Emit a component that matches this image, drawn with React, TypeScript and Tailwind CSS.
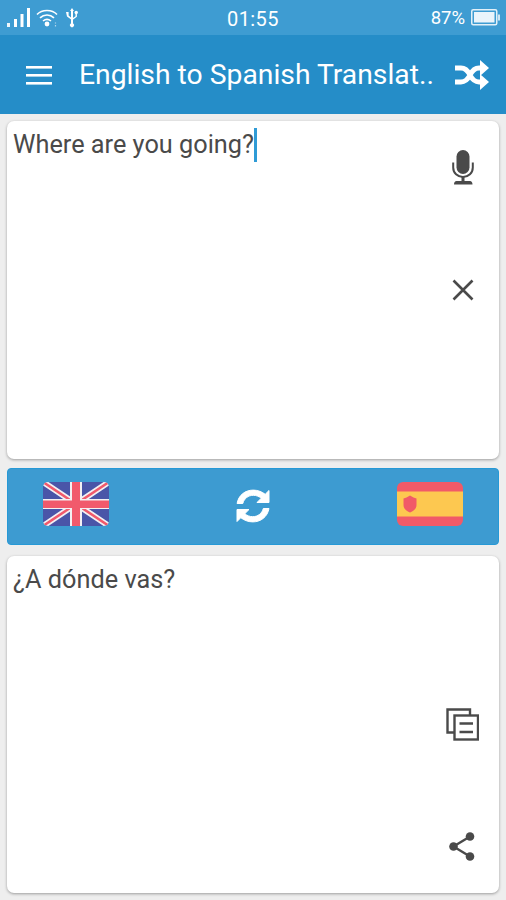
import React from 'react';

const Signal = () => (
  <svg width="23" height="20" viewBox="0 0 23 20" fill="white">
    <rect x="0" y="15" width="3" height="4" opacity="0.9" />
    <rect x="7" y="11" width="3" height="8" />
    <rect x="13.500" y="6" width="3" height="13" />
    <rect x="20" y="0" width="3" height="19" />
  </svg>
);

const Wifi = () => (
  <svg width="23" height="20" viewBox="0 0 23 20" fill="none" stroke="white" strokeWidth="1.600">
    <path d="M1 6.500C6 1.200 16 1.200 21 6.500" />
    <path d="M4 9.800C8 6 14 6 18 9.800" />
    <path d="M7 13C9.500 11 12.500 11 15 13" />
    <circle cx="11" cy="16" r="2.400" fill="white" stroke="none" />
    <path d="M19.500 14.500v1M19.500 17v1.500" strokeWidth="1.200" opacity="0.6" />
  </svg>
);

const Usb = () => (
  <svg width="14" height="20" viewBox="0 0 14 20" fill="white">
    <path d="M7 0l2 3H8v11.200l.1 1.300a2 2 0 1 1-2.200 0l.1-1.300V3H5z" />
    <path d="M1 4h2.600v3.500L6.500 10v1.800L2 8.500z" />
    <circle cx="11.200" cy="4.500" r="1.700" />
    <path d="M10.500 5h1.400v3.800L7.500 12v-1.800l3-2z" />
  </svg>
);

const Battery = () => (
  <svg width="29" height="17" viewBox="0 0 29 17">
    <rect x="0.750" y="0.750" width="25" height="15" rx="1.500" fill="none" stroke="white" strokeWidth="1.500" opacity="0.85" />
    <rect x="3" y="3" width="20.500" height="10.500" fill="#eaf4fb" />
    <rect x="27" y="5.500" width="2" height="6" fill="white" opacity="0.75" />
  </svg>
);

const Menu = () => (
  <svg width="27" height="20" viewBox="0 0 27 20" fill="white">
    <rect x="0" y="1" width="26" height="2.600" />
    <rect x="0" y="9" width="26" height="2.600" />
    <rect x="0" y="17" width="26" height="2.600" />
  </svg>
);

const Shuffle = () => (
  <svg width="35" height="30" viewBox="0 0 35 30">
    <path d="M0 8h6c5 0 7 3 9 7s4 7 9 7h3M0 22h6c5 0 7-3 9-7s4-7 9-7h3" fill="none" stroke="white" strokeWidth="5" />
    <path d="M25 0l9 8-9 8zM25 14l9 8-9 8z" fill="white" />
  </svg>
);

const Mic = () => (
  <svg width="22" height="35" viewBox="0 0 22 35">
    <rect x="4.500" y="0" width="13" height="24" rx="6.500" fill="#4a4a4a" />
    <path d="M1.200 12.500v5c0 5.500 4.300 9.500 9.800 9.500s9.800-4 9.800-9.500v-5" fill="none" stroke="#4a4a4a" strokeWidth="2" />
    <path d="M9.500 26.500h3v4.500h5.500c1.500 0 2.500 1.300 2.500 3.500H2c0-2.200 1-3.500 2.500-3.500h5z" fill="#4a4a4a" />
  </svg>
);

const Close = () => (
  <svg width="22" height="22" viewBox="0 0 22 22" fill="none" stroke="#4a4a4a" strokeWidth="2.600">
    <path d="M1.500 1.500l19 19M20.500 1.500l-19 19" />
  </svg>
);

const Copy = () => (
  <svg width="33" height="33" viewBox="0 0 33 33" fill="none" stroke="#4a4a4a" strokeWidth="2.400">
    <path d="M8 24.500H1.500V1.500h22.500v6" />
    <rect x="8.500" y="7.500" width="23.500" height="24" fill="white" />
    <path d="M13.500 15.500h13.500M13.500 24h13.500" />
  </svg>
);

const Share = () => (
  <svg width="27" height="29" viewBox="0 0 27 29" fill="#4a4a4a">
    <circle cx="21" cy="4.500" r="4.300" />
    <circle cx="4.500" cy="14.500" r="4.300" />
    <circle cx="21" cy="24.500" r="4.300" />
    <path d="M21 4.500L4.500 14.500 21 24.500" fill="none" stroke="#4a4a4a" strokeWidth="2.400" />
  </svg>
);

const Refresh = () => (
  <svg width="34" height="34" viewBox="0 0 34 34" fill="white" stroke="white" strokeWidth="1">
    <path d="M33 1.500v12H21l4.200-4.200C23 7.400 20.300 6.300 17.300 6.300c-5 0-9.200 3.200-10.500 8.200H1.100C2.500 6.300 9 1.100 17.300 1.100c4.600 0 8.700 1.800 11.900 4.200z" />
    <path d="M1 32.500v-12h12l-4.200 4.200c2.200 1.900 5 3 8 3 5 0 9.200-3.200 10.500-8.200h5.700C31.500 27.700 25 32.900 16.700 32.900c-4.600 0-8.700-1.800-11.900-4.200z" />
  </svg>
);

const UkFlag = () => (
  <svg width="66" height="44" viewBox="0 0 66 44" className="rounded-[5px]">
    <rect width="66" height="44" fill="#4a55a8" />
    <path d="M0 0l66 44M66 0L0 44" stroke="#f3f0f2" strokeWidth="6" />
    <path d="M0 0l66 44M66 0L0 44" stroke="#f15a6c" strokeWidth="2.500" />
    <rect x="27" width="12" height="44" fill="#f3f0f2" />
    <rect y="17" width="66" height="10" fill="#f3f0f2" />
    <rect x="29" width="8" height="44" fill="#f15a6c" />
    <rect y="18.500" width="66" height="7.500" fill="#f15a6c" />
  </svg>
);

const EsFlag = () => (
  <svg width="66" height="44" viewBox="0 0 66 44" className="rounded-[6px]">
    <rect width="66" height="44" fill="#f15a68" />
    <rect y="9.500" width="66" height="25" fill="#fdc850" />
    <path d="M6.500 16.500l3-1 3.500-2 3.500 2 3 1v6.500c0 4-3.500 6.500-6.500 7.500-3-1-6.500-3.500-6.500-7.500z" fill="#f15a68" />
  </svg>
);

export default function App() {
  return (
    <div className="flex h-[900px] w-[506px] flex-col overflow-hidden bg-[#eeeeee] font-['Roboto',sans-serif]">
      {/* status bar */}
      <div className="relative flex h-[35px] shrink-0 items-center justify-between bg-[#3e9cd2] pl-[7px] pr-[6px] text-white">
        <div className="flex items-center gap-[6px]">
          <Signal />
          <Wifi />
          <Usb />
        </div>
        <span className="absolute left-[227px] top-[5px] text-[20px] leading-[28px] tracking-[0.4px]">01:55</span>
        <div className="flex items-center gap-[6px]">
          <span className="text-[18.500px] leading-[28px]">87%</span>
          <Battery />
        </div>
      </div>

      {/* app bar */}
      <div className="flex h-[79px] shrink-0 items-center bg-[#258dc8] pl-[26px] pr-[16px] text-white">
        <Menu />
        <span className="ml-[26px] flex-1 whitespace-nowrap text-[28.300px] leading-[36px]">English to Spanish Translat..</span>
        <Shuffle />
      </div>

      <div className="flex flex-1 flex-col px-[7px] pb-[7px] pt-[7px]">
        {/* source card */}
        <div className="flex h-[338px] shrink-0 rounded-[7px] bg-white pl-[6px] pr-[25px] shadow-[0_1px_3px_rgba(0,0,0,0.35)]">
          <div className="flex-1 pt-[7px]">
            <span className="border-r-[3px] border-[#2f9bd6] pb-[3px] pt-[2px] text-[25.300px] leading-[34px] text-[#4a4a4a]">Where are you going?</span>
          </div>
          <div className="flex flex-col items-center pt-[29px]">
            <Mic />
            <div className="mt-[94px]">
              <Close />
            </div>
          </div>
        </div>

        {/* language bar */}
        <div className="mt-[9px] flex h-[77px] shrink-0 items-center justify-between rounded-[4px] border border-[#2699d6] bg-[#3d9bd1] pb-[5px] pl-[35px] pr-[35px]">
          <UkFlag />
          <div className="translate-y-[2px]">
            <Refresh />
          </div>
          <EsFlag />
        </div>

        {/* result card */}
        <div className="mt-[11px] flex h-[337px] shrink-0 rounded-[7px] bg-white pl-[6px] pr-[20px] shadow-[0_1px_3px_rgba(0,0,0,0.35)]">
          <div className="flex-1 pt-[7px]">
            <span className="text-[25.300px] leading-[34px] text-[#4a4a4a]">¿A dónde vas?</span>
          </div>
          <div className="flex flex-col items-center pt-[152px]">
            <Copy />
            <div className="mt-[91px]">
              <Share />
            </div>
          </div>
        </div>
      </div>
    </div>
  );
}
